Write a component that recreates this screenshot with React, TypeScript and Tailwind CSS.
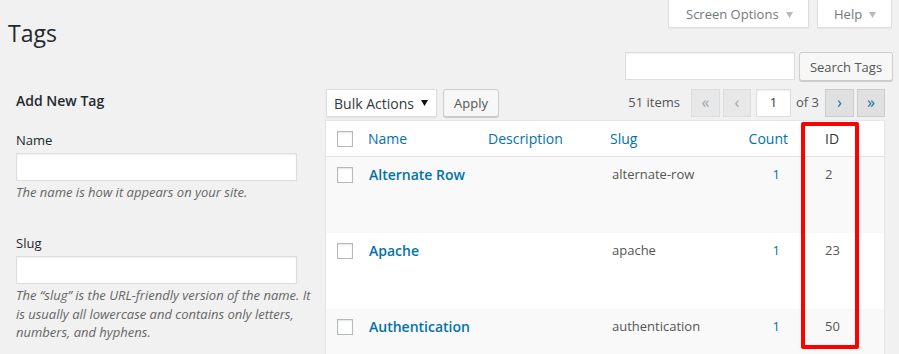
const tags = [
  { name: "Alternate Row", slug: "alternate-row", count: 1, id: 2 },
  { name: "Apache", slug: "apache", count: 1, id: 23 },
  { name: "Authentication", slug: "authentication", count: 1, id: 50 },
];

function DownArrow({ color }: { color: string }) {
  return (
    <svg width="7" height="6" viewBox="0 0 7 6" className="shrink-0">
      <path d="M0 0 L7 0 L3.5 6 Z" fill={color} />
    </svg>
  );
}

function Checkbox() {
  return <div className="h-[16px] w-[16px] border border-[#b4b9be] bg-white shadow-[inset_0_1px_2px_rgba(0,0,0,0.1)]" />;
}

export default function App() {
  return (
    <div className="relative min-h-screen overflow-hidden bg-[#f1f1f1] font-['Open_Sans',sans-serif] text-[13px] text-[#444]">
      {/* Header */}
      <div className="flex items-start justify-between pl-2 pr-[7px]">
        <h1 className="mt-[19px] text-[23px] leading-[29px] font-normal text-[#23282d]">Tags</h1>
        <div className="flex gap-[8px]">
          <div className="flex h-[28px] w-[141px] items-start gap-[7px] border border-t-0 border-[#ddd] bg-white pl-[17px] pt-[4px] shadow-[0_1px_1px_rgba(0,0,0,0.04)]">
            <span className="leading-[20px] text-[#72777c]">Screen Options</span>
            <span className="mt-[8px]"><DownArrow color="#b4b9be" /></span>
          </div>
          <div className="flex h-[28px] w-[75px] items-start gap-[7px] border border-t-0 border-[#ddd] bg-white pl-[16px] pt-[4px] shadow-[0_1px_1px_rgba(0,0,0,0.04)]">
            <span className="leading-[20px] text-[#72777c]">Help</span>
            <span className="mt-[8px]"><DownArrow color="#b4b9be" /></span>
          </div>
        </div>
      </div>

      {/* Search */}
      <div className="mt-[4px] flex justify-end gap-[4px] pr-[6px]">
        <div className="h-[28px] w-[170px] border border-[#ddd] bg-white shadow-[inset_0_1px_2px_rgba(0,0,0,0.07)]" />
        <button className="h-[29px] w-[94px] rounded-[3px] border border-[#ccc] bg-[#f7f7f7] leading-[26px] text-[#555] shadow-[0_1px_0_#ccc]">
          Search Tags
        </button>
      </div>

      {/* Main */}
      <div className="mt-[8px] flex">
        {/* Add new tag form */}
        <div className="ml-[16px] w-[296px]">
          <h2 className="mt-[1px] text-[14px] leading-[21px] font-semibold text-[#23282d]">Add New Tag</h2>
          <div className="mt-[19px] leading-[20px] text-[#23282d]">Name</div>
          <div className="mt-[3px] h-[28px] w-[281px] border border-[#ddd] bg-white shadow-[inset_0_1px_2px_rgba(0,0,0,0.07)]" />
          <p className="mt-[2px] leading-[19px] italic text-[#666]">The name is how it appears on your site.</p>
          <div className="mt-[31px] leading-[20px] text-[#23282d]">Slug</div>
          <div className="mt-[3px] h-[28px] w-[281px] border border-[#ddd] bg-white shadow-[inset_0_1px_2px_rgba(0,0,0,0.07)]" />
          <p className="mt-[2px] leading-[18.5px] italic text-[#666]">
            The “slug” is the URL-friendly version of the name. It is usually all lowercase and contains only letters, numbers, and hyphens.
          </p>
        </div>

        {/* Tag list */}
        <div className="ml-[13px] w-[560px]">
          <div className="flex h-[28px] items-center">
            <div className="ml-[1px] flex h-[28px] w-[111px] items-center justify-between border border-[#ddd] bg-white pl-[7px] pr-[8px] shadow-[0_1px_2px_rgba(0,0,0,0.07)]">
              <span className="text-[14px] text-[#32373c]">Bulk Actions</span>
              <DownArrow color="#111" />
            </div>
            <button className="ml-[6px] h-[28px] w-[56px] rounded-[3px] border border-[#ccc] bg-[#f7f7f7] leading-[24px] text-[#555] shadow-[0_1px_0_#ccc]">
              Apply
            </button>

            <div className="ml-auto flex items-center">
              <span className="text-[#555]">51 items</span>
              <div className="ml-[11px] flex h-[28px] w-[29px] items-center justify-center border border-[#ddd] bg-[#e8e8e8] pb-[2px] text-[16px] text-[#a0a5aa]">«</div>
              <div className="ml-[3px] flex h-[28px] w-[28px] items-center justify-center border border-[#ddd] bg-[#e8e8e8] pb-[2px] text-[16px] text-[#a0a5aa]">‹</div>
              <div className="ml-[5px] flex h-[28px] w-[35px] items-center justify-center border border-[#ddd] bg-white text-[#32373c] shadow-[inset_0_1px_2px_rgba(0,0,0,0.07)]">1</div>
              <span className="ml-[5px] text-[#555]">of 3</span>
              <div className="ml-[6px] flex h-[28px] w-[29px] items-center justify-center border border-[#ccc] bg-[#e0e0e0] pb-[2px] text-[16px] text-[#0073aa]">›</div>
              <div className="ml-[3px] flex h-[28px] w-[28px] items-center justify-center border border-[#ccc] bg-[#e0e0e0] pb-[2px] text-[16px] text-[#0073aa]">»</div>
            </div>
          </div>

          <div className="mt-[3px] border border-[#e5e5e5] bg-white shadow-[0_1px_1px_rgba(0,0,0,0.04)]">
            <div className="grid h-[36px] grid-cols-[30px_120px_122px_139px_76px_1fr] border-b border-[#e1e1e1] text-[14px] leading-[21px]">
              <div className="pl-[11px] pt-[10px]"><Checkbox /></div>
              <div className="pl-[12px] pt-[7px] text-[#0073aa]">Name</div>
              <div className="pl-[12px] pt-[7px] text-[#0073aa]">Description</div>
              <div className="pl-[12px] pt-[7px] text-[#0073aa]">Slug</div>
              <div className="pr-[25px] pt-[7px] text-right text-[#0073aa]">Count</div>
              <div className="pl-[12px] pt-[7px] text-[#32373c]">ID</div>
            </div>
            {tags.map((tag, i) => (
              <div
                key={tag.id}
                className={`grid h-[76px] grid-cols-[30px_120px_122px_139px_76px_1fr] ${i % 2 === 0 ? "bg-[#f9f9f9]" : "bg-white"}`}
              >
                <div className="pl-[11px] pt-[10px]"><Checkbox /></div>
                <div className="pl-[13px] pt-[7px] text-[14px] leading-[21px] font-semibold text-[#0073aa]">{tag.name}</div>
                <div />
                <div className="pl-[14px] pt-[7px] leading-[20px] text-[#555]">{tag.slug}</div>
                <div className="pr-[33px] pt-[7px] text-right leading-[20px] text-[#0073aa]">{tag.count}</div>
                <div className="pl-[12px] pt-[7px] leading-[20px] text-[#555]">{tag.id}</div>
              </div>
            ))}
          </div>
        </div>
      </div>

      {/* Highlight annotation */}
      <div className="absolute left-[801px] top-[122px] h-[227px] w-[58px] rounded-[2px] border-4 border-[#ff0000]" />
    </div>
  );
}
